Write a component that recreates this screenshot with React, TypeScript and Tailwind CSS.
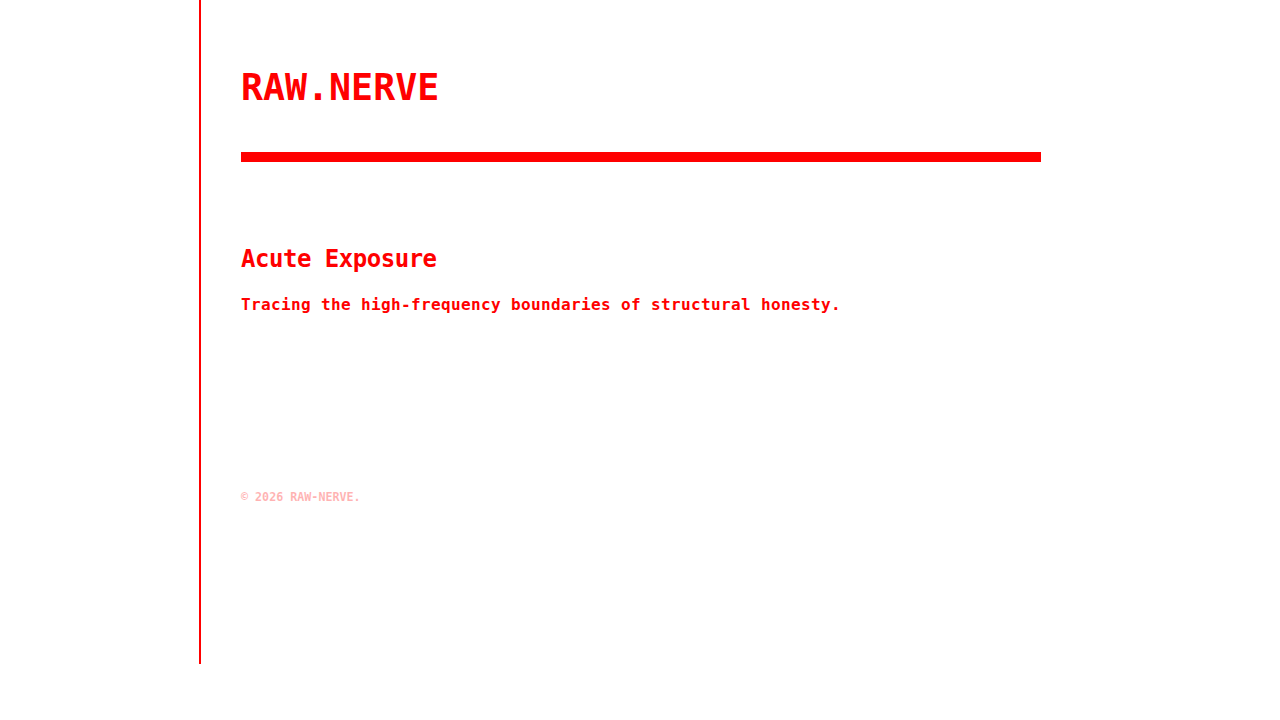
export default function App() {
  return (
    <div className="min-h-screen bg-white" style={{ fontFamily: '"DejaVu Sans Mono", "Liberation Mono", monospace' }}>
      <div className="mx-auto flex w-[882px] flex-col border-l-2 border-[#ff0000] px-10 pb-[161px] pt-[70px] text-[#ff0000]">
        <header className="flex flex-col">
          <h1 className="text-[36.6px] font-bold leading-none">RAW.NERVE</h1>
          <div className="mt-[45px] h-[10px] w-[800px] bg-[#ff0000]" />
        </header>
        <main className="mt-[85px] flex flex-col">
          <h2 className="text-[24px] font-bold leading-none tracking-[-0.02em]">Acute Exposure</h2>
          <p className="mt-[26px] text-[16px] font-bold leading-none tracking-[0.023em]">
            Tracing the high-frequency boundaries of structural honesty.
          </p>
        </main>
        <footer className="mt-[179px] text-[11.7px] font-bold leading-none text-[#ff0000]/30">
          © 2026 RAW-NERVE.
        </footer>
      </div>
    </div>
  );
}
